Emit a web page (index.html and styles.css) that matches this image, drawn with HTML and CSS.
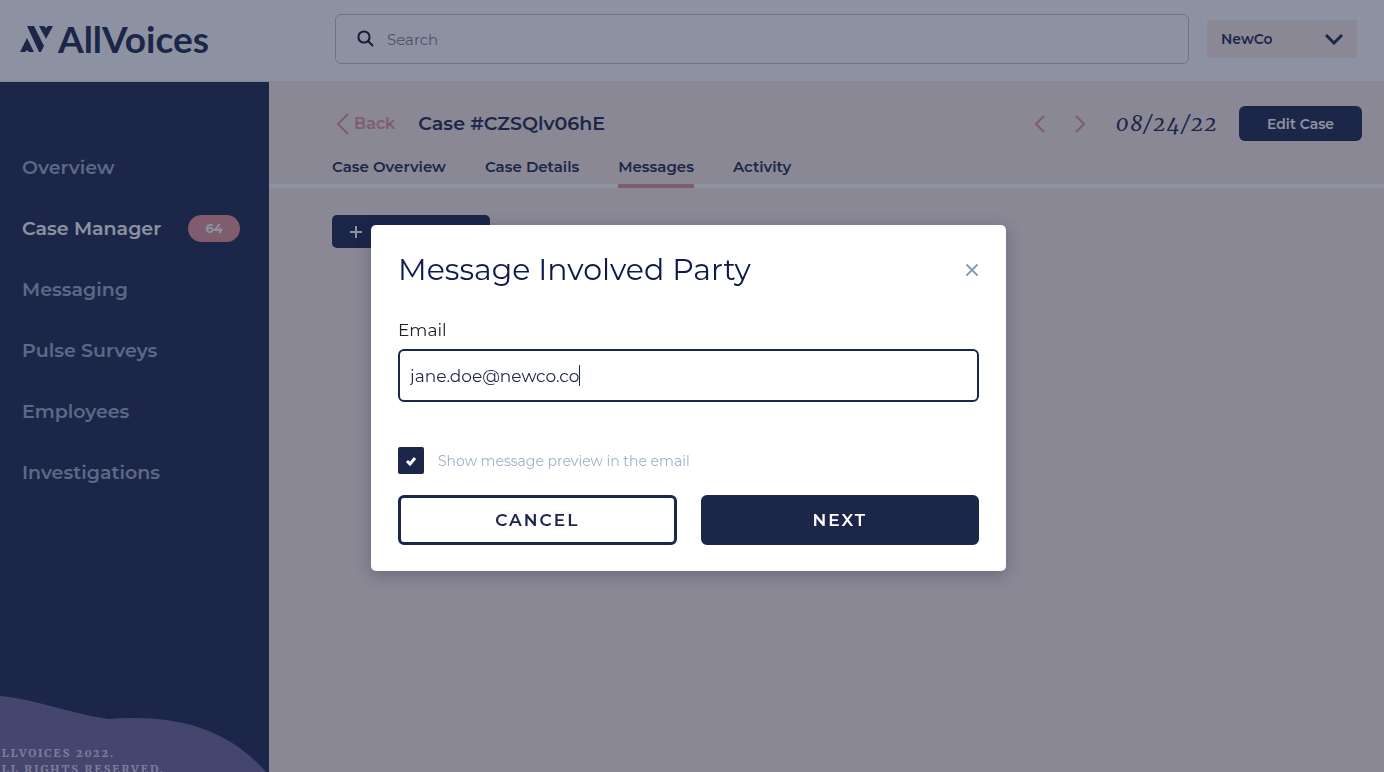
FILE: index.html
```html
<!DOCTYPE html>
<html lang="en">
<head>
    <meta charset="UTF-8">
    <meta name="viewport" content="width=device-width, initial-scale=1.0">
    <title>AllVoices - Case Manager</title>
    <link rel="stylesheet" href="styles.css">
</head>
<body>
    <header class="topbar">
        <a class="logo" href="#">
            <svg width="34" height="28" viewBox="0 0 34 28" aria-hidden="true">
                <path d="M0 27 L7 13 L14 27 H9 L7 25 L5 27 Z"/>
                <path d="M7 1 H14 L24 21 L21 27 H19 Z"/>
                <path d="M19 1 H24 L26 3 L28 1 H33 L26 14 Z"/>
            </svg>
            <span>AllVoices</span>
        </a>
        <label class="search">
            <svg width="18" height="18" viewBox="0 0 18 18" aria-hidden="true">
                <circle cx="7" cy="7" r="5.6"/>
                <path d="M11 11 L16 16"/>
            </svg>
            <input type="search" placeholder="Search" aria-label="Search">
        </label>
        <div class="company">
            <select aria-label="Company">
                <option>NewCo</option>
            </select>
            <svg width="18" height="12" viewBox="0 0 18 12" aria-hidden="true">
                <path d="M1 2 L9 10 L17 2"/>
            </svg>
        </div>
    </header>

    <div class="layout">
        <aside class="sidebar">
            <nav>
                <a href="#">Overview</a>
                <a href="#" class="active">Case Manager <span class="badge">64</span></a>
                <a href="#">Messaging</a>
                <a href="#">Pulse Surveys</a>
                <a href="#">Employees</a>
                <a href="#">Investigations</a>
            </nav>
            <footer class="sidebar-footer">
                <svg viewBox="0 0 269 78" preserveAspectRatio="none" aria-hidden="true">
                    <path d="M0 2 C35 5 68 19 108 25 C170 20 225 31 266 78 H0 Z"/>
                </svg>
                <p>ALLVOICES 2022.<br>ALL RIGHTS RESERVED.</p>
            </footer>
        </aside>

        <main class="content">
            <div class="case-header">
                <a class="back" href="#">
                    <svg width="14" height="22" viewBox="0 0 14 22" aria-hidden="true"><path d="M12 1 L2 11 L12 21"/></svg>
                    Back
                </a>
                <h1>Case #CZSQlv06hE</h1>
                <div class="pager">
                    <button aria-label="Previous case">
                        <svg width="10" height="18" viewBox="0 0 10 18"><path d="M9 1 L1 9 L9 17"/></svg>
                    </button>
                    <button aria-label="Next case">
                        <svg width="10" height="18" viewBox="0 0 10 18"><path d="M1 1 L9 9 L1 17"/></svg>
                    </button>
                </div>
                <time datetime="2022-08-24">08/24/22</time>
                <button class="edit-btn">Edit Case</button>
            </div>
            <nav class="tabs">
                <a href="#">Case Overview</a>
                <a href="#">Case Details</a>
                <a href="#" class="active">Messages</a>
                <a href="#">Activity</a>
            </nav>
            <div class="panel">
                <button class="add-btn" aria-label="New message">
                    <svg width="14" height="14" viewBox="0 0 14 14"><path d="M7 1 V13 M1 7 H13"/></svg>
                </button>
            </div>
        </main>
    </div>

    <div class="overlay">
        <form class="modal" role="dialog" aria-labelledby="modalTitle">
            <div class="modal-header">
                <h2 id="modalTitle">Message Involved Party</h2>
                <button type="button" class="close-btn" aria-label="Close">
                    <svg width="14" height="14" viewBox="0 0 14 14"><path d="M2 2 L12 12 M12 2 L2 12"/></svg>
                </button>
            </div>
            <label class="field-label" for="emailInput">Email</label>
            <div class="field">
                <input type="text" id="emailInput" value="jane.doe@newco.co">
                <span class="caret"></span>
            </div>
            <div class="check-row">
                <span class="check">
                    <input type="checkbox" id="previewInput" checked>
                    <svg width="12" height="10" viewBox="0 0 12 10" aria-hidden="true"><path d="M2 5 L5 8 L10 2"/></svg>
                </span>
                <label for="previewInput">Show message preview in the email</label>
            </div>
            <div class="actions">
                <button type="button" class="cancel-btn">CANCEL</button>
                <button type="button" class="next-btn">NEXT</button>
            </div>
        </form>
    </div>
</body>
</html>
```
FILE: styles.css
```css
* {
    box-sizing: border-box;
}
body {
    margin: 0;
    min-height: 100vh;
    display: flex;
    flex-direction: column;
    font-family: Montserrat, Inter, sans-serif;
    color: #1b2648;
    background: #f9eae2;
}
a {
    color: inherit;
    text-decoration: none;
}
button, input, select {
    font: inherit;
    color: inherit;
}
button {
    padding: 0;
    border: none;
    background: none;
}
svg {
    fill: none;
    stroke: currentColor;
    stroke-width: 2;
}

/* Top bar */
.topbar {
    display: flex;
    align-items: center;
    height: 82px;
    padding: 0 27px 3px 20px;
    background: #fff;
    border-bottom: 1px solid #e8e8f0;
}
.logo {
    flex: none;
    display: flex;
    align-items: center;
    gap: 4px;
    width: 315px;
    font-family: Lato, sans-serif;
    font-size: 37px;
    font-weight: 700;
    line-height: 40px;
}
.logo svg {
    fill: currentColor;
    stroke: none;
}
.search {
    flex: 1;
    display: flex;
    align-items: center;
    gap: 12px;
    height: 50px;
    padding: 0 21px;
    border: 1px solid #b4c2d8;
    border-radius: 6px;
}
.search svg {
    color: #0c1020;
}
.search input {
    flex: 1;
    padding: 0;
    border: none;
    outline: none;
    background: none;
    font-size: 15px;
}
.search input::placeholder {
    color: #7c7c88;
}
.company {
    display: grid;
    align-items: center;
    width: 150px;
    margin-left: 18px;
}
.company select, .company svg {
    grid-area: 1 / 1;
}
.company select {
    appearance: none;
    height: 38px;
    padding: 0 14px;
    border: none;
    border-radius: 2px;
    background: #f9eae2;
    font-size: 14px;
    font-weight: 600;
}
.company svg {
    justify-self: end;
    margin-right: 14px;
    stroke-width: 3;
    pointer-events: none;
}

/* Sidebar */
.layout {
    flex: 1;
    display: flex;
}
.sidebar {
    flex: none;
    display: flex;
    flex-direction: column;
    justify-content: space-between;
    width: 269px;
    padding-top: 55px;
    background: #1b2648;
    overflow: hidden;
}
.sidebar nav a {
    display: flex;
    align-items: center;
    justify-content: space-between;
    height: 61px;
    padding: 0 29px 0 22px;
    color: #9dacc2;
    font-size: 19px;
    font-weight: 600;
}
.sidebar nav a.active {
    color: #fff;
}
.badge {
    width: 52px;
    border-radius: 14px;
    background: #e59490;
    font-size: 13px;
    font-weight: 700;
    line-height: 27px;
    text-align: center;
}
.sidebar-footer {
    display: grid;
    height: 78px;
}
.sidebar-footer svg, .sidebar-footer p {
    grid-area: 1 / 1;
}
.sidebar-footer svg {
    width: 100%;
    height: 78px;
    fill: #6f6698;
    stroke: none;
}
.sidebar-footer p {
    margin: 51px 0 0 -8px;
    color: #e0d8e4;
    font-family: Merriweather, "Liberation Serif", serif;
    font-size: 11px;
    font-variant-numeric: oldstyle-nums;
    font-weight: 700;
    letter-spacing: 2px;
    line-height: 16px;
    white-space: nowrap;
}

/* Case */
.content {
    flex: 1;
    min-width: 0;
}
.case-header {
    display: flex;
    align-items: center;
    padding: 24px 22px 0 67px;
}
.back {
    display: flex;
    align-items: center;
    gap: 4px;
    color: #e59490;
    font-size: 16px;
    font-weight: 600;
}
.case-header h1 {
    margin: 0 auto 0 23px;
    font-size: 19px;
    font-weight: 600;
}
.pager {
    display: flex;
    gap: 30px;
    margin-right: 31px;
    color: #e59490;
}
.pager svg {
    display: block;
}
.case-header time {
    margin-right: 21px;
    font-family: Merriweather, "Liberation Serif", serif;
    font-size: 21px;
    font-style: italic;
    font-variant-numeric: oldstyle-nums;
    letter-spacing: 2px;
    line-height: 30px;
}
.edit-btn {
    width: 123px;
    height: 35px;
    border-radius: 6px;
    background: #1b2648;
    color: #fff;
    font-size: 14px;
    font-weight: 600;
}
.tabs {
    display: flex;
    gap: 39px;
    padding-left: 63px;
    border-bottom: 4px solid #fff;
}
.tabs a {
    height: 47px;
    margin-bottom: -4px;
    padding-top: 9px;
    border-bottom: 4px solid transparent;
    font-size: 15px;
    font-weight: 600;
    line-height: 34px;
}
.tabs a.active {
    border-color: #e59490;
}
.panel {
    padding: 27px 63px;
}
.add-btn {
    display: flex;
    align-items: center;
    width: 158px;
    height: 33px;
    padding-left: 17px;
    border-radius: 5px;
    background: #1b2648;
    color: #fff;
}

/* Modal */
.overlay {
    position: fixed;
    inset: 0;
    display: flex;
    align-items: center;
    justify-content: center;
    padding: 24px 7px 0 0;
    background: rgba(27, 38, 72, 0.5);
}
.modal {
    width: 635px;
    padding: 26px 27px;
    border-radius: 5px;
    background: #fff;
    box-shadow: 0 4px 16px rgba(27, 38, 72, 0.3);
}
.modal-header {
    display: flex;
    align-items: center;
    justify-content: space-between;
    margin-bottom: 31px;
}
.modal-header h2 {
    margin: 0;
    color: #0f1a4a;
    font-size: 30px;
    font-weight: 400;
    line-height: 38px;
}
.close-btn {
    color: #8a9db8;
}
.close-btn svg {
    display: block;
    stroke-linecap: round;
}
.field-label {
    display: block;
    margin-bottom: 9px;
    color: #222;
    font-size: 17px;
    line-height: 20px;
}
.field {
    position: relative;
    margin-bottom: 45px;
}
.field input {
    display: block;
    width: 100%;
    height: 53px;
    padding: 0 10px;
    border: 2px solid #1b2648;
    border-radius: 6px;
    outline: none;
    font-size: 17px;
}
.caret {
    position: absolute;
    top: 16px;
    left: 181px;
    width: 1px;
    height: 21px;
    background: #1b2648;
}
.check-row {
    display: flex;
    align-items: center;
    gap: 14px;
    margin-bottom: 21px;
    color: #9fb1cb;
    font-size: 14px;
}
.check {
    display: grid;
    place-items: center;
    color: #fff;
}
.check input, .check svg {
    grid-area: 1 / 1;
}
.check input {
    appearance: none;
    width: 26px;
    height: 27px;
    margin: 0;
    border-radius: 2px;
    background: #1b2648;
}
.check svg {
    z-index: 1;
    pointer-events: none;
    stroke-width: 3;
}
.actions {
    display: grid;
    grid-template-columns: 1fr 1fr;
    gap: 24px;
}
.actions button {
    height: 50px;
    border: 3px solid #1b2648;
    border-radius: 6px;
    font-size: 17px;
    font-weight: 600;
    letter-spacing: 2px;
}
.next-btn {
    background: #1b2648;
    color: #fff;
}
```
